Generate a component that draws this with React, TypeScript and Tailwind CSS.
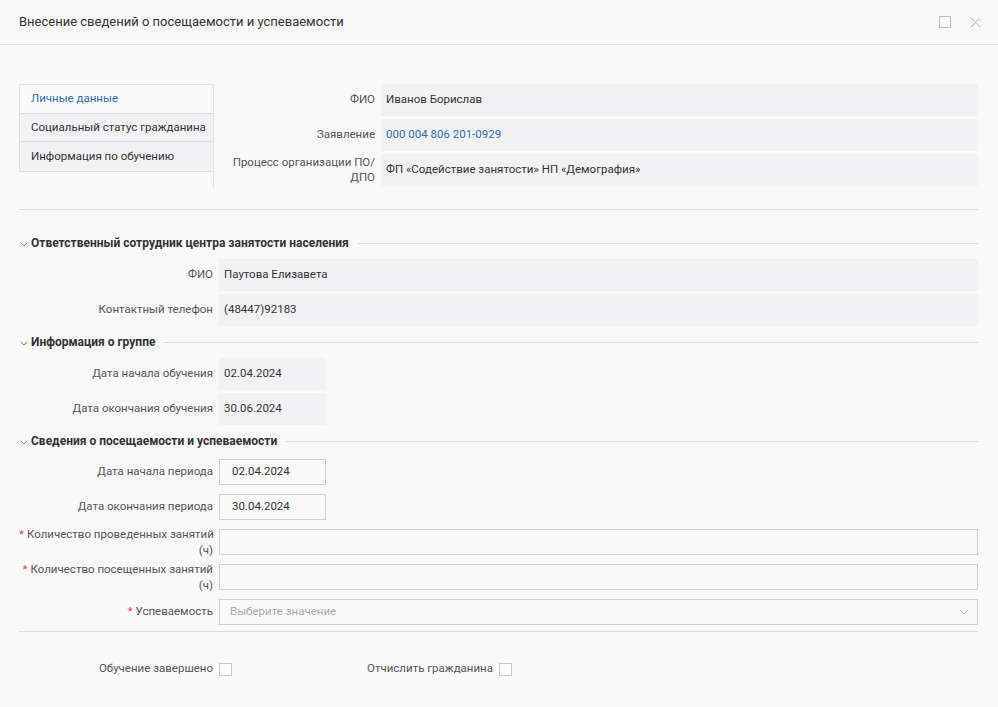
import React from 'react';

const Chevron = ({ className = '' }: { className?: string }) => (
  <svg viewBox="0 0 10 6" className={className} fill="none" stroke="currentColor" strokeWidth="1">
    <path d="M1 0.8 L5 5 L9 0.8" />
  </svg>
);

function Section({ title }: { title: string }) {
  return (
    <div className="flex items-center h-4">
      <Chevron className="w-[8px] h-[5px] text-[#555] ml-[1px] mr-[3px] mt-[2px]" />
      <span className="text-[12px] font-bold text-[#333] whitespace-nowrap">{title}</span>
      <div className="flex-1 h-px bg-[#dcdcdc] ml-[9px]" />
    </div>
  );
}

function ReadRow({ label, value, narrow = false }: { label: string; value: string; narrow?: boolean }) {
  return (
    <div className="flex items-stretch h-8">
      <div className="w-[200px] shrink-0 pr-[6px] flex items-center justify-end text-[#555] text-right whitespace-nowrap">
        {label}
      </div>
      <div className={`${narrow ? 'w-[107px]' : 'flex-1'} bg-[#f2f2f4] flex items-center px-[5px] text-[#333]`}>
        {value}
      </div>
    </div>
  );
}

function InputRow({ label, value, required = false, wide = false, twoLine = false }: {
  label: React.ReactNode; value?: string; required?: boolean; wide?: boolean; twoLine?: boolean;
}) {
  return (
    <div className="flex items-center h-[26px]">
      <div className={`w-[200px] shrink-0 pr-[6px] text-right text-[#555] whitespace-nowrap ${twoLine ? 'leading-4' : ''}`}>
        {required && <span className="text-[#e0474c] mr-[3px]">*</span>}
        {label}
      </div>
      <div
        className={`${wide ? 'flex-1' : 'w-[107px]'} h-[26px] border border-[#cfcfcf] bg-[#f9f9f9] flex items-center px-[12px] text-[#333]`}
      >
        {value}
      </div>
    </div>
  );
}

export default function App() {
  return (
    <div
      className="w-[998px] h-[707px] bg-[#f9f9f9] text-[11.5px] overflow-hidden"
      style={{ fontFamily: 'Roboto, "Liberation Sans", sans-serif' }}
    >
      <div className="h-[45px] border-b border-[#e2e2e2] flex items-center justify-between pl-[19px] pr-[17px]">
        <div className="text-[13px] text-[#333]">Внесение сведений о посещаемости и успеваемости</div>
        <div className="flex items-center gap-[19px]">
          <div className="w-[12px] h-[12px] border border-[#bdbdbd]" />
          <svg viewBox="0 0 12 12" className="w-[11px] h-[11px] text-[#b0b0b0]" stroke="currentColor" strokeWidth="1">
            <path d="M1 1 L11 11 M11 1 L1 11" />
          </svg>
        </div>
      </div>

      <div className="pl-[19px] pr-[20px]">
        <div className="flex mt-[39px]">
          <div className="w-[195px] shrink-0 border-r border-[#e2e2e2] h-[104px]">
            <div className="h-[29px] border-t border-l border-[#e2e2e2] flex items-center pl-[11px] text-[#2f6db5] whitespace-nowrap">
              Личные данные
            </div>
            <div className="h-[29px] border border-r-0 border-[#dedee2] bg-[#f2f2f4] flex items-center pl-[11px] text-[#333] whitespace-nowrap">
              Социальный статус гражданина
            </div>
            <div className="h-[30px] border-b border-l border-[#dedee2] bg-[#f2f2f4] flex items-center pl-[11px] text-[#333] whitespace-nowrap">
              Информация по обучению
            </div>
          </div>
          <div className="flex-1 flex flex-col gap-[3px]">
            <div className="flex h-8">
              <div className="w-[167px] pr-[6px] flex items-center justify-end text-[#555]">ФИО</div>
              <div className="flex-1 bg-[#f2f2f4] flex items-center px-[5px] text-[#333]">Иванов Борислав</div>
            </div>
            <div className="flex h-8">
              <div className="w-[167px] pr-[6px] flex items-center justify-end text-[#555]">Заявление</div>
              <div className="flex-1 bg-[#f2f2f4] flex items-center px-[5px] text-[#2f6db5]">000 004 806 201-0929</div>
            </div>
            <div className="flex h-8">
              <div className="w-[167px] pr-[6px] flex items-center justify-end text-right text-[#555] leading-[15px]">
                Процесс организации ПО/ ДПО
              </div>
              <div className="flex-1 bg-[#f2f2f4] flex items-center px-[5px] text-[#333]">
                ФП «Содействие занятости» НП «Демография»
              </div>
            </div>
          </div>
        </div>

        <div className="h-px bg-[#dcdcdc] mt-[21px]" />

        <div className="mt-[25px]">
          <Section title="Ответственный сотрудник центра занятости населения" />
        </div>
        <div className="mt-[8px] flex flex-col gap-[3px]">
          <ReadRow label="ФИО" value="Паутова Елизавета" />
          <ReadRow label="Контактный телефон" value="(48447)92183" />
        </div>

        <div className="mt-[8px]">
          <Section title="Информация о группе" />
        </div>
        <div className="mt-[8px] flex flex-col gap-[3px]">
          <ReadRow label="Дата начала обучения" value="02.04.2024" narrow />
          <ReadRow label="Дата окончания обучения" value="30.06.2024" narrow />
        </div>

        <div className="mt-[8px]">
          <Section title="Сведения о посещаемости и успеваемости" />
        </div>
        <div className="mt-[10px] flex flex-col gap-[9px]">
          <InputRow label="Дата начала периода" value="02.04.2024" />
          <InputRow label="Дата окончания периода" value="30.04.2024" />
          <InputRow label={<>Количество проведенных занятий<br />(ч)</>} required wide twoLine />
          <InputRow label={<>Количество посещенных занятий<br />(ч)</>} required wide twoLine />
          <div className="flex items-center h-[26px]">
            <div className="w-[200px] shrink-0 pr-[6px] text-right text-[#555]">
              <span className="text-[#e0474c] mr-[3px]">*</span>Успеваемость
            </div>
            <div className="flex-1 h-[26px] border border-[#cfcfcf] flex items-center justify-between pl-[10px] pr-[8px]">
              <span className="text-[#aaa]">Выберите значение</span>
              <Chevron className="w-[10px] h-[6px] text-[#bbb]" />
            </div>
          </div>
        </div>

        <div className="h-px bg-[#dcdcdc] mt-[6px]" />

        <div className="flex items-center mt-[30px] h-[14px]">
          <div className="w-[200px] shrink-0 pr-[6px] text-right text-[#555]">Обучение завершено</div>
          <div className="w-[13px] h-[13px] border border-[#c8c8c8] bg-white" />
          <div className="w-[267px] shrink-0 pr-[6px] text-right text-[#555]">Отчислить гражданина</div>
          <div className="w-[13px] h-[13px] border border-[#c8c8c8] bg-white" />
        </div>
      </div>
    </div>
  );
}
